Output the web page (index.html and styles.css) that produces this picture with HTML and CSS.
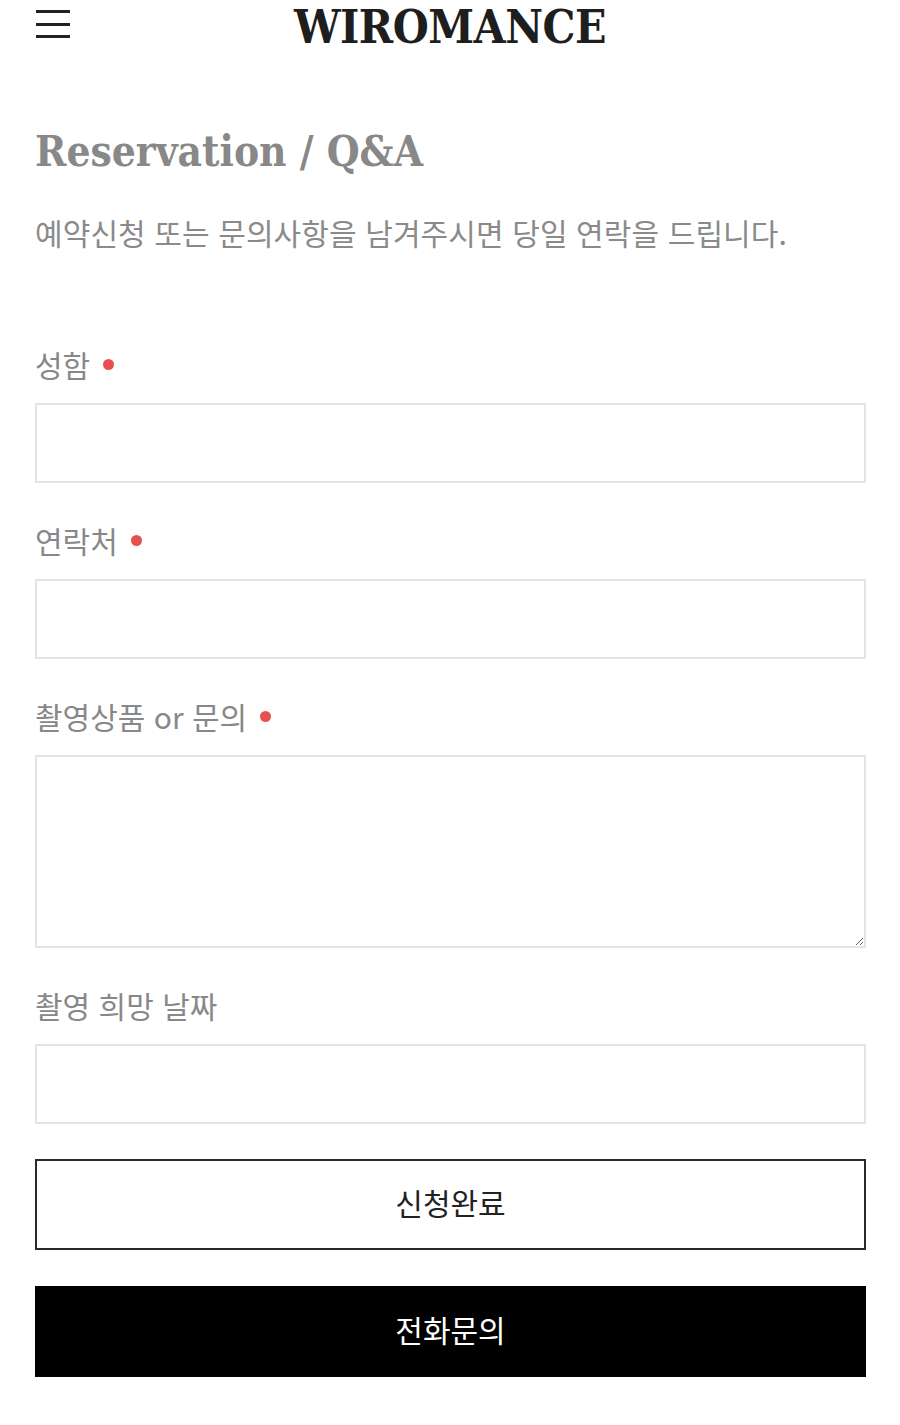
FILE: index.html
```html
<!DOCTYPE html>
<html lang="ko">
<head>
<meta charset="utf-8">
<title>WIROMANCE - Reservation / Q&amp;A</title>
<link rel="stylesheet" href="styles.css">
</head>
<body>
<header class="top">
  <button class="menu" aria-label="menu">
    <span></span><span></span><span></span>
  </button>
  <div class="logo">WIROMANCE</div>
</header>
<main class="page">
  <h1 class="title">Reservation / Q&amp;A</h1>
  <p class="lead">예약신청 또는 문의사항을 남겨주시면 당일 연락을 드립니다.</p>
  <form class="form">
    <div class="field">
      <label class="label">성함 <span class="req"></span></label>
      <input class="input" type="text">
    </div>
    <div class="field">
      <label class="label">연락처 <span class="req"></span></label>
      <input class="input" type="text">
    </div>
    <div class="field">
      <label class="label">촬영상품 or 문의 <span class="req"></span></label>
      <textarea class="input area"></textarea>
    </div>
    <div class="field">
      <label class="label">촬영 희망 날짜</label>
      <input class="input" type="text">
    </div>
    <button type="button" class="btn btn-outline">신청완료</button>
    <button type="button" class="btn btn-solid">전화문의</button>
  </form>
</main>
</body>
</html>
```
FILE: styles.css
```css
* { box-sizing: border-box; }
body {
  margin: 0;
  background: #fff;
  font-family: "Noto Sans CJK KR", "Noto Sans", sans-serif;
  color: #222;
}
.top {
  position: relative;
  height: 62px;
  display: flex;
  align-items: flex-start;
  justify-content: center;
}
.menu {
  position: absolute;
  left: 36px;
  top: 10px;
  width: 34px;
  height: 28px;
  padding: 0;
  border: 0;
  background: none;
  display: flex;
  flex-direction: column;
  justify-content: space-between;
}
.menu span {
  display: block;
  height: 3px;
  background: #222;
  width: 100%;
}
.logo {
  font-family: "DejaVu Serif", serif;
  font-stretch: condensed;
  font-weight: bold;
  font-size: 46px;
  line-height: 54px;
  color: #1e1e1e;
  letter-spacing: -0.5px;
}
.page {
  padding: 0 34px 40px 35px;
}
.title {
  margin: 60px 0 0;
  font-family: "DejaVu Serif", serif;
  font-stretch: condensed;
  font-weight: bold;
  font-size: 42px;
  line-height: 60px;
  color: #888;
}
.lead {
  margin: 30px 0 0;
  font-size: 30px;
  line-height: 40px;
  color: #8a8a8a;
  letter-spacing: 0.1px;
}
.form {
  margin-top: 92px;
  display: flex;
  flex-direction: column;
}
.field {
  display: flex;
  flex-direction: column;
  margin-bottom: 37px;
}
.label {
  font-size: 30px;
  line-height: 40px;
  color: #888;
  margin-bottom: 19px;
  display: flex;
  align-items: center;
  gap: 13px;
}
.req {
  width: 11px;
  height: 11px;
  border-radius: 50%;
  background: #e85050;
}
.input {
  display: block;
  width: 100%;
  height: 80px;
  border: 2px solid #e4e4e4;
  background: #fff;
  font: inherit;
  font-size: 28px;
  padding: 10px 16px;
  outline: none;
}
.area {
  height: 193px;
  resize: vertical;
}
.btn {
  width: 100%;
  height: 91px;
  font-family: "Noto Sans CJK KR", sans-serif;
  font-size: 30px;
  padding: 0 0 6px;
  cursor: pointer;
}
.btn-outline {
  background: #fff;
  color: #222;
  border: 2px solid #2a2a2a;
  margin-top: -2px;
}
.btn-solid {
  margin-top: 36px;
  background: #000;
  color: #fff;
  border: 0;
}
```
